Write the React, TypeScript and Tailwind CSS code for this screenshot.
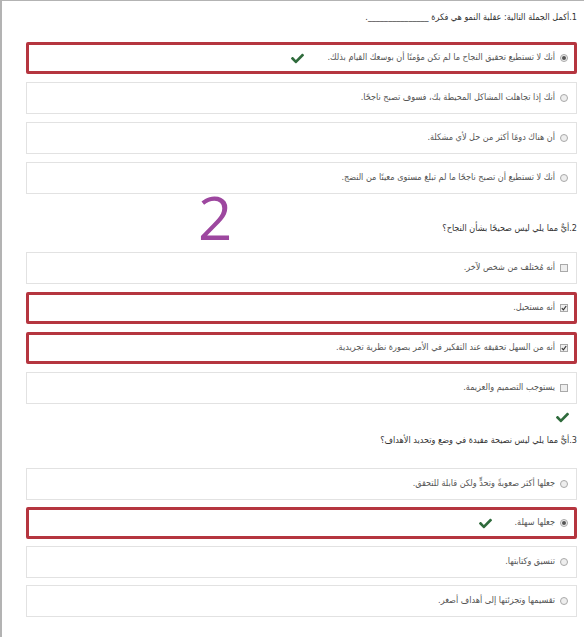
import { FaCheck } from 'react-icons/fa';

type Opt = { text: string; selected?: boolean; marked?: boolean; correct?: boolean };

const q1: Opt[] = [
  { text: 'أنك لا تستطيع تحقيق النجاح ما لم تكن مؤمنًا أن بوسعك القيام بذلك.', selected: true, marked: true, correct: true },
  { text: 'أنك إذا تجاهلت المشاكل المحيطة بك، فسوف تصبح ناجحًا.' },
  { text: 'أن هناك دومًا أكثر من حل لأي مشكلة.' },
  { text: 'أنك لا تستطيع أن تصبح ناجحًا ما لم تبلغ مستوى معينًا من النضج.' },
];

const q2: Opt[] = [
  { text: 'أنه مُختلف من شخص لآخر.' },
  { text: 'أنه مستحيل.', selected: true, marked: true },
  { text: 'أنه من السهل تحقيقه عند التفكير في الأمر بصورة نظرية تجريدية.', selected: true, marked: true },
  { text: 'يستوجب التصميم والعزيمة.' },
];

const q3: Opt[] = [
  { text: 'جعلها أكثر صعوبةً وتحدٍّ ولكن قابلة للتحقق.' },
  { text: 'جعلها سهلة.', selected: true, marked: true, correct: true },
  { text: 'تنسيق وكتابتها.' },
  { text: 'تقسيمها وتجزئتها إلى أهداف أصغر.' },
];

function Radio({ on }: { on?: boolean }) {
  return (
    <span className="w-[8px] h-[8px] rounded-full border border-[#a9a9a9] bg-[#eeeeee] flex items-center justify-center shrink-0">
      {on && <span className="w-[4px] h-[4px] rounded-full bg-[#555]" />}
    </span>
  );
}

function Box({ on }: { on?: boolean }) {
  return (
    <span className="w-[8px] h-[8px] border border-[#a9a9a9] bg-[#eeeeee] flex items-center justify-center shrink-0">
      {on && (
        <svg width="6" height="6" viewBox="0 0 6 6">
          <path d="M0.8 3.2 L2.4 4.8 L5.2 1" stroke="#333" strokeWidth="1.2" fill="none" />
        </svg>
      )}
    </span>
  );
}

function Option({ o, kind }: { o: Opt; kind: 'radio' | 'check' }) {
  const cls = o.marked
    ? 'border-[3px] border-[#b5353f] rounded-[2px] px-[6px]'
    : 'border border-[#e2e2e2] px-[8px]';
  return (
    <div className={`h-[32px] flex items-center gap-[5px] ${cls}`}>
      {kind === 'radio' ? <Radio on={o.selected} /> : <Box on={o.selected} />}
      <span className="text-[9px] text-[#555]">{o.text}</span>
      {o.correct && <FaCheck className="text-[#2f6b3c] text-[13px] mr-[18px]" />}
    </div>
  );
}

export default function App() {
  return (
    <div
      dir="rtl"
      className="relative w-[584px] h-[637px] bg-white border-t border-l-2 border-[#b3b3b3] pr-[7px] pl-[24px] overflow-hidden"
      style={{ fontFamily: '"DejaVu Sans Condensed", "DejaVu Sans", sans-serif' }}
    >
      <div className="h-[20px] mt-[7px] mb-[14px] text-[9px] text-[#333] flex items-center">
        1.أكمل الجملة التالية: عقلية النمو هي فكرة _______________.
      </div>
      <div className="flex flex-col gap-[8px]">
        {q1.map((o, i) => <Option key={i} o={o} kind="radio" />)}
      </div>

      <div className="h-[20px] mt-[25px] mb-[13px] text-[9px] text-[#333] flex items-center">
        2.أيٌّ مما يلي ليس صحيحًا بشأن النجاح؟
      </div>
      <div className="flex flex-col gap-[8px]">
        {q2.map((o, i) => <Option key={i} o={o} kind="check" />)}
      </div>
      <div className="h-[18px] mt-[4px] pr-[8px] flex items-center">
        <FaCheck className="text-[#2f6b3c] text-[13px]" />
      </div>

      <div className="h-[20px] mt-[5px] mb-[17px] text-[9px] text-[#333] flex items-center">
        3.أيٌّ مما يلي ليس نصيحة مفيدة في وضع وتحديد الأهداف؟
      </div>
      <div className="flex flex-col gap-[7px]">
        {q3.map((o, i) => <Option key={i} o={o} kind="radio" />)}
      </div>

      <span
        className="absolute left-[196px] top-[186px] text-[60px] leading-none text-[#9d479f]"
        style={{ fontFamily: '"Open Sans", sans-serif' }}
      >
        2
      </span>
    </div>
  );
}
